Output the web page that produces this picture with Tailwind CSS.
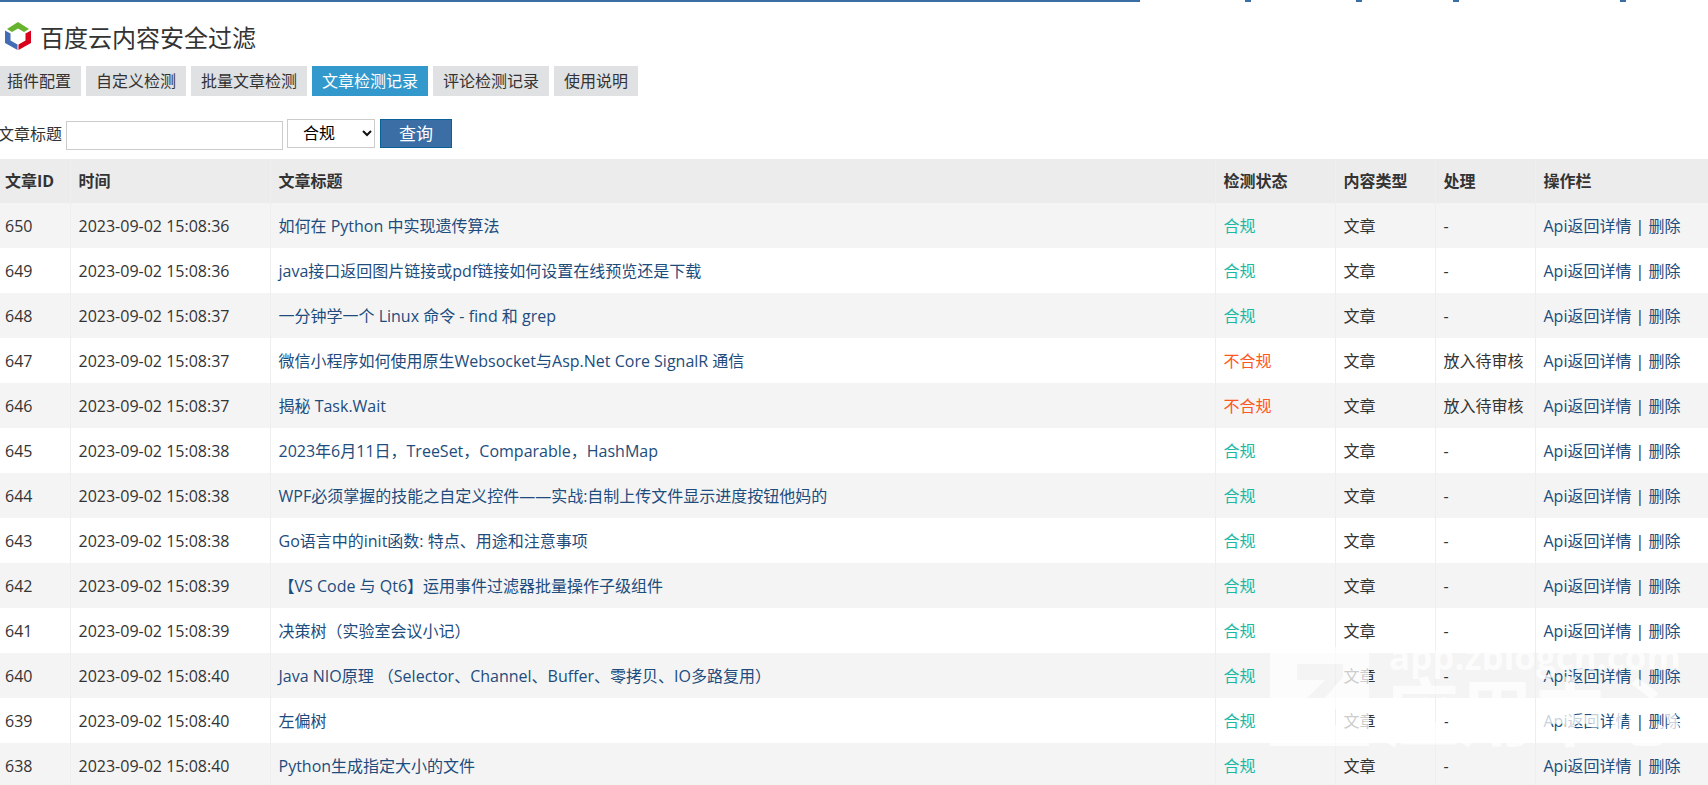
<!DOCTYPE html>
<html lang="zh-CN">

<head>
    <meta charset="utf-8">
    <title>百度云内容安全过滤</title>
    <meta name="viewport" content="width=device-width, initial-scale=1.0" />
    <script src="https://cdn.jsdelivr.net/npm/@tailwindcss/browser@4"></script>
</head>

<body class="bg-white text-[#333] text-base overflow-hidden font-['Open_Sans','Noto_Sans_CJK_SC',sans-serif]">
    <!-- bottom edge of the top navigation -->
    <header class="flex h-[2px] bg-[#3a6ea5]">
        <div class="flex-1"></div>
        <nav class="flex gap-[6px]">
            <div class="w-[105px] bg-white"></div>
            <div class="w-[105px] bg-white"></div>
            <div class="w-[91px] bg-white"></div>
            <div class="w-[161px] bg-white"></div>
            <div class="w-[82px] bg-white"></div>
        </nav>
    </header>

    <main class="-ml-[3px]">
        <div class="flex items-center gap-2 h-16 pl-2 pt-1">
            <svg class="w-[26px] h-[28px]" viewBox="0 0 26 28">
                <path d="M2 7 L13 0 L24 7 L19 10 L13 6.500 L7 10 Z" fill="#65b32e" />
                <path d="M0 8.500 L5.500 11.500 V18.500 L12.500 22.500 V28 L0 21 Z" fill="#426db4" />
                <path d="M26 8.500 L20.500 11.500 V18.500 L13.500 22.500 V28 L26 21 Z" fill="#d9001b" />
            </svg>
            <h1 class="text-2xl pl-px pt-1">百度云内容安全过滤</h1>
        </div>

        <nav class="flex gap-[5px] leading-[30px]">
            <a href="#" class="px-[10px] bg-[#dfe1e3]">插件配置</a>
            <a href="#" class="px-[10px] bg-[#dfe1e3]">自定义检测</a>
            <a href="#" class="px-[10px] bg-[#dfe1e3]">批量文章检测</a>
            <a href="#" class="px-[10px] bg-[#3399cc] text-white">文章检测记录</a>
            <a href="#" class="px-[10px] bg-[#dfe1e3]">评论检测记录</a>
            <a href="#" class="px-[10px] bg-[#dfe1e3]">使用说明</a>
        </nav>

        <form class="flex items-center pt-[21px] pb-[9px] pl-px">
            <label for="title" class="pr-1">文章标题</label>
            <input id="title" type="text" class="w-[217px] h-[29px] mt-1 border border-[#ccc] px-2">
            <div class="relative ml-1">
                <select aria-label="检测状态" class="appearance-none w-[88px] h-[29px] border border-[#ccc] pl-[15px] text-black bg-white leading-[27px]">
                    <option>合规</option>
                    <option>不合规</option>
                </select>
                <svg class="absolute right-[3px] top-[11px] w-[10px] h-[7px] pointer-events-none" viewBox="0 0 10 7" fill="none" stroke="#111" stroke-width="2">
                    <path d="M1 1 L5 5 L9 1" />
                </svg>
            </div>
            <button type="button" class="ml-[5px] w-[72px] h-[29px] border border-[#0a6099] bg-[#3a6ea5] text-white text-[17px] leading-[27px]">查询</button>
        </form>

        <table class="w-full table-fixed border-collapse text-left leading-5 whitespace-nowrap">
            <colgroup>
                <col class="w-[73px]">
                <col class="w-[200px]">
                <col>
                <col class="w-[120px]">
                <col class="w-[100px]">
                <col class="w-[100px]">
                <col class="w-[173px]">
            </colgroup>
            <thead>
                <tr class="h-11 bg-[#ececec] [&>th]:px-2 [&>th]:border-r [&>th]:border-[#efefef] [&>th]:font-bold [&>th:last-child]:border-r-0">
                    <th>文章ID</th>
                    <th>时间</th>
                    <th>文章标题</th>
                    <th>检测状态</th>
                    <th>内容类型</th>
                    <th>处理</th>
                    <th>操作栏</th>
                </tr>
            </thead>
            <tbody id="records"></tbody>
        </table>
    </main>

    <!-- watermark -->
    <div class="absolute left-[1270px] top-[647px] flex gap-4 text-white opacity-75 font-bold pointer-events-none whitespace-nowrap">
        <svg class="w-[99px] h-[99px]" viewBox="0 0 99 99" fill="#fff">
            <path fill-rule="evenodd" d="M0 0 H99 V99 H0 Z M27 17 H73 V30 L45 62 H73 V78 H27 V62 L55 33 H27 Z" />
        </svg>
        <div>
            <div class="text-[35px] leading-[20px] pl-1">app.zblogcn.com</div>
            <div class="text-[74px] leading-[90px]">应用中心</div>
        </div>
    </div>
</body>
<script>
    const records = [
        [650, "36", "如何在 Python 中实现遗传算法", true],
        [649, "36", "java接口返回图片链接或pdf链接如何设置在线预览还是下载", true],
        [648, "37", "一分钟学一个 Linux 命令 - find 和 grep", true],
        [647, "37", "微信小程序如何使用原生Websocket与Asp.Net Core SignalR 通信", false],
        [646, "37", "揭秘 Task.Wait", false],
        [645, "38", "2023年6月11日，TreeSet，Comparable，HashMap", true],
        [644, "38", "WPF必须掌握的技能之自定义控件——实战:自制上传文件显示进度按钮他妈的", true],
        [643, "38", "Go语言中的init函数: 特点、用途和注意事项", true],
        [642, "39", "【VS Code 与 Qt6】运用事件过滤器批量操作子级组件", true],
        [641, "39", "决策树（实验室会议小记）", true],
        [640, "40", "Java NIO原理 （Selector、Channel、Buffer、零拷贝、IO多路复用）", true],
        [639, "40", "左偏树", true],
        [638, "40", "Python生成指定大小的文件", true],
    ];

    document.getElementById("records").innerHTML = records.map(function (r) {
        const status = r[3] ? '<span class="text-[#1bb9a5]">合规</span>' : '<span class="text-[#ff5722]">不合规</span>';
        return '<tr class="h-[45px] odd:bg-[#f4f4f4] [&>td]:px-2 [&>td]:border-r [&>td]:border-[#eee] [&>td:last-child]:border-r-0">' +
            '<td>' + r[0] + '</td>' +
            '<td>2023-09-02 15:08:' + r[1] + '</td>' +
            '<td><a href="#" class="text-[#1d4c7d]">' + r[2] + '</a></td>' +
            '<td>' + status + '</td>' +
            '<td>文章</td>' +
            '<td>' + (r[3] ? '-' : '放入待审核') + '</td>' +
            '<td><a href="#" class="text-[#1d4c7d]">Api返回详情</a> | <a href="#" class="text-[#1d4c7d]">删除</a></td>' +
            '</tr>';
    }).join("");
</script>

</html>
